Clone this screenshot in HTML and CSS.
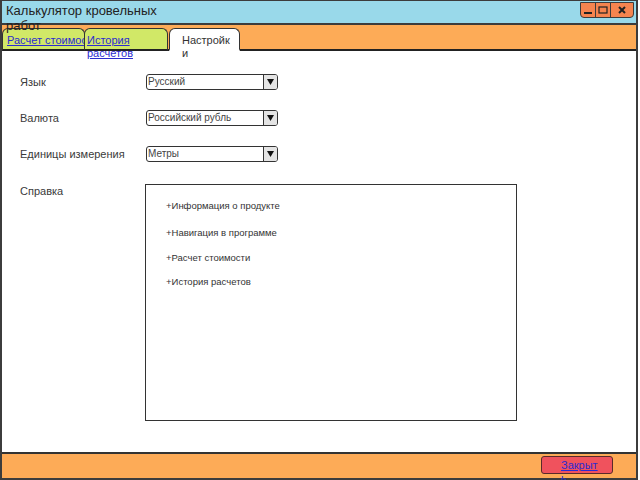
FILE: index.html
```html
<!DOCTYPE html>
<html lang="ru">
<head>
<meta charset="utf-8">
<title>Калькулятор кровельных работ</title>
<link rel="stylesheet" href="styles.css">
</head>
<body>
<div class="window">
  <div class="titlebar">
    <div class="title">Калькулятор кровельных работ</div>
    <div class="winbtns">
      <span class="wbtn"><svg width="10" height="10" viewBox="0 0 10 10"><rect x="1" y="7" width="8" height="2" fill="#222"/></svg></span>
      <span class="wbtn"><svg width="10" height="10" viewBox="0 0 10 10"><rect x="1" y="2" width="8" height="6" fill="none" stroke="#222" stroke-width="1.2"/></svg></span>
      <span class="wbtn wide"><svg width="10" height="10" viewBox="0 0 10 10"><path d="M2 2 L8 8 M8 2 L2 8" stroke="#222" stroke-width="2"/></svg></span>
    </div>
  </div>
  <div class="tabbar">
    <div class="tab tab-green tab1"><a href="#">Расчет стоимости</a></div>
    <div class="tab tab-green tab2"><a href="#">История расчетов</a></div>
    <div class="tab tab-active tab3"><span>Настройки</span></div>
  </div>
  <div class="content">
    <div class="field">
      <span class="label">Язык</span>
      <div class="select"><span class="value">Русский</span><span class="arrow"><svg width="7" height="6" viewBox="0 0 7 6"><path d="M0 0 H7 L3.5 6 Z" fill="#111"/></svg></span></div>
    </div>
    <div class="field">
      <span class="label">Валюта</span>
      <div class="select"><span class="value">Российский рубль</span><span class="arrow"><svg width="7" height="6" viewBox="0 0 7 6"><path d="M0 0 H7 L3.5 6 Z" fill="#111"/></svg></span></div>
    </div>
    <div class="field">
      <span class="label">Единицы измерения</span>
      <div class="select"><span class="value">Метры</span><span class="arrow"><svg width="7" height="6" viewBox="0 0 7 6"><path d="M0 0 H7 L3.5 6 Z" fill="#111"/></svg></span></div>
    </div>
    <div class="help-row">
      <span class="label help-label">Справка</span>
      <div class="help-box">
        <div class="help-item i1">+Информация о продукте</div>
        <div class="help-item i2">+Навигация в программе</div>
        <div class="help-item i3">+Расчет стоимости</div>
        <div class="help-item i4">+История расчетов</div>
      </div>
    </div>
  </div>
  <div class="bottombar">
    <div class="close-btn"><a href="#">Закрыть</a></div>
  </div>
</div>
</body>
</html>
```

FILE: styles.css
```css
* { box-sizing: border-box; }
html, body { margin: 0; padding: 0; background: #ffffff; }
body { font-family: "Liberation Sans", Arial, sans-serif; }

.window {
  width: 638px;
  height: 480px;
  border: 2px solid #3c3c3c;
  border-top-width: 1px;
  display: flex;
  flex-direction: column;
  background: #ffffff;
}

.titlebar {
  height: 24px;
  flex: none;
  background: #99d9ea;
  border-bottom: 2px solid #3c3c3c;
  display: flex;
  justify-content: space-between;
  align-items: flex-start;
  position: relative;
  z-index: 2;
}
.title {
  width: 162px;
  padding: 2px 0 0 4px;
  font-size: 13px;
  line-height: 15px;
  color: #222;
}
.winbtns {
  display: flex;
  margin: 1px 2px 0 0;
  border: 1px solid #3c3c3c;
  border-radius: 0 0 4px 4px;
  overflow: hidden;
  background: #f5844f;
}
.wbtn {
  width: 15px;
  height: 14px;
  display: flex;
  align-items: center;
  justify-content: center;
  border-right: 1px solid #3c3c3c;
}
.wbtn.wide { width: 22px; border-right: none; }

.tabbar {
  height: 26px;
  flex: none;
  background: #fdab57;
  border-bottom: 2px solid #222;
  display: flex;
  align-items: flex-end;
  position: relative;
  z-index: 1;
}
.tab {
  height: 23px;
  margin-bottom: -2px;
  border: 1px solid #333;
  border-bottom: 2px solid #222;
  border-radius: 6px 6px 0 0;
  font-size: 11px;
  line-height: 13px;
  padding: 5px 0 0 4px;
}
.tab-green { background: #d1e867; }
.tab a { color: #2b2bd0; text-decoration: underline; }
.tab1 { width: 83px; white-space: nowrap; position: relative; z-index: 1; }
.tab1 a { display: block; width: 79px; overflow: hidden; }
.tab2 { width: 84px; margin-left: -1px; position: relative; z-index: 2; padding-left: 2px; }
.tab3 {
  width: 71px;
  margin-left: 1px;
  background: #ffffff;
  border-bottom-color: #ffffff;
  padding-left: 12px;
  color: #333;
}
.tab2 a { display: block; width: 50px; }
.tab3 span { display: block; width: 51px; word-break: break-all; }

.content {
  flex: 1;
  padding: 23px 0 0 18px;
  display: flex;
  flex-direction: column;
}
.field {
  display: grid;
  grid-template-columns: 126px 132px;
  align-items: center;
  height: 15px;
  margin-bottom: 21px;
}
.label {
  font-size: 11px;
  color: #3a3a3a;
}
.select {
  height: 16px;
  border: 1.5px solid #333;
  border-radius: 3px;
  display: flex;
  align-items: stretch;
  overflow: hidden;
  background: #fff;
}
.value {
  flex: 1;
  font-size: 10px;
  line-height: 13px;
  padding-left: 1px;
  color: #444;
}
.arrow {
  width: 14px;
  border-left: 1px solid #333;
  background: #e4e4e4;
  display: flex;
  align-items: center;
  justify-content: center;
}

.help-row {
  display: grid;
  grid-template-columns: 125px 372px;
  margin-top: 2px;
}
.help-label { padding-top: 1px; }
.help-box {
  height: 237px;
  border: 1.5px solid #333;
  padding: 15px 0 0 20px;
  display: flex;
  flex-direction: column;
}
.help-item {
  font-size: 9.5px;
  line-height: 12px;
  color: #333;
}
.i2 { margin-top: 15px; }
.i3 { margin-top: 13px; }
.i4 { margin-top: 12px; }

.bottombar {
  height: 26px;
  flex: none;
  background: #fdab57;
  border-top: 2px solid #333;
  display: flex;
  justify-content: flex-end;
  padding: 2px 23px 0 0;
}
.close-btn {
  width: 72px;
  height: 18px;
  background: #f0525d;
  border: 1.5px solid #5a2a2a;
  border-radius: 3px;
  font-size: 11px;
  line-height: 13px;
  padding: 2px 0 0 19px;
}
.close-btn a {
  display: block;
  width: 38px;
  color: #2b2bd0;
  text-decoration: underline;
  word-break: break-all;
}
```
